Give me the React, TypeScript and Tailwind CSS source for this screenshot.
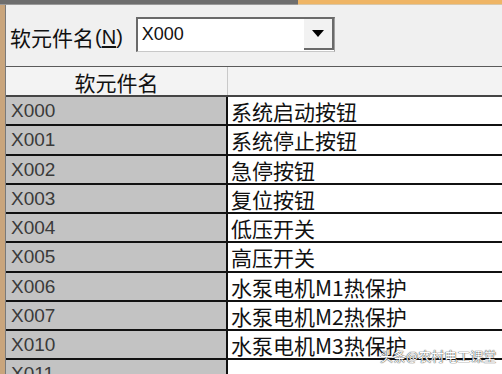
import React from "react";

const rows: [string, string][] = [
  ["X000", "系统启动按钮"],
  ["X001", "系统停止按钮"],
  ["X002", "急停按钮"],
  ["X003", "复位按钮"],
  ["X004", "低压开关"],
  ["X005", "高压开关"],
  ["X006", "水泵电机M1热保护"],
  ["X007", "水泵电机M2热保护"],
  ["X010", "水泵电机M3热保护"],
  ["X011", ""],
];

const cjk = "font-['Microsoft_YaHei','Noto_Sans_CJK_SC',sans-serif]";
const latin = "font-['Liberation_Sans','Noto_Sans_CJK_SC',sans-serif]";

export default function App() {
  return (
    <div className="relative w-[502px] h-[374px] overflow-hidden bg-[#f0f0f0] flex flex-col">
      <div className="h-[5px] flex shrink-0">
        <div className="w-[298px] bg-[#6e6e6e] border-b border-[#9a9a9a]" />
        <div className="flex-1 bg-[#efb565] border-b border-[#d9c7a8]" />
      </div>
      <div className="flex-1 flex min-h-0">
        <div className="w-[5px] bg-[#c9a57c] shrink-0" />
        <div className="flex-1 flex flex-col border-l border-[#7a7a7a] min-w-0">
          <div className="h-[61px] shrink-0 flex items-start">
            <div className={`${cjk} text-[21px] text-[#111] ml-[4px] mt-[19px] leading-[26px] flex items-center`}>
              软元件名
              <span className={`${latin} text-[20px] ml-[1px] flex items-center`}>
                (<span className="underline underline-offset-2">N</span>)
              </span>
            </div>
            <div className="ml-[13px] mt-[12px] w-[199px] h-[35px] bg-white border-t-2 border-l-2 border-[#6a6a6a] border-r border-b border-r-[#a0a0a0] border-b-[#c8c8c8] flex">
              <div className={`${latin} flex-1 text-[18px] text-[#111] pl-[4px] leading-[30px]`}>X000</div>
              <div className="w-[30px] h-[31px] bg-[#f2f2f2] border-r-2 border-b-2 border-[#6a6a6a] flex items-center justify-center">
                <svg width="12" height="7" viewBox="0 0 12 7">
                  <path d="M0 0 L12 0 L6 7 Z" fill="#000" />
                </svg>
              </div>
            </div>
          </div>
          <div className="flex-1 flex flex-col border-t border-[#5a5a5a] min-h-0">
            <div className="h-[30px] shrink-0 flex bg-[#f3f3f3] border-b-2 border-[#444]">
              <div className={`${cjk} w-[222px] text-[21px] text-[#111] flex items-end justify-center leading-[25px] border-r border-[#c9c9c9]`}>
                软元件名
              </div>
              <div className="flex-1" />
            </div>
            {rows.map(([k, v]) => (
              <div key={k} className="h-[29.26px] shrink-0 flex border-b-2 border-[#111]">
                <div className={`${latin} w-[222px] bg-[#c3c3c3] text-[19px] text-[#3a3a3a] pl-[5px] leading-[28px] border-r-2 border-[#111]`}>
                  {k}
                </div>
                <div className={`${cjk} flex-1 bg-white text-[21px] text-[#111] pl-[3px] leading-[28px] whitespace-nowrap`}>
                  {v}
                </div>
              </div>
            ))}
          </div>
        </div>
      </div>
      <div className={`${cjk} absolute left-[380px] top-[346px] text-[13px] text-white [text-shadow:0_0_1px_#333,0_0_1px_#333] whitespace-nowrap`}>
        头条@农村电工课堂
      </div>
    </div>
  );
}
